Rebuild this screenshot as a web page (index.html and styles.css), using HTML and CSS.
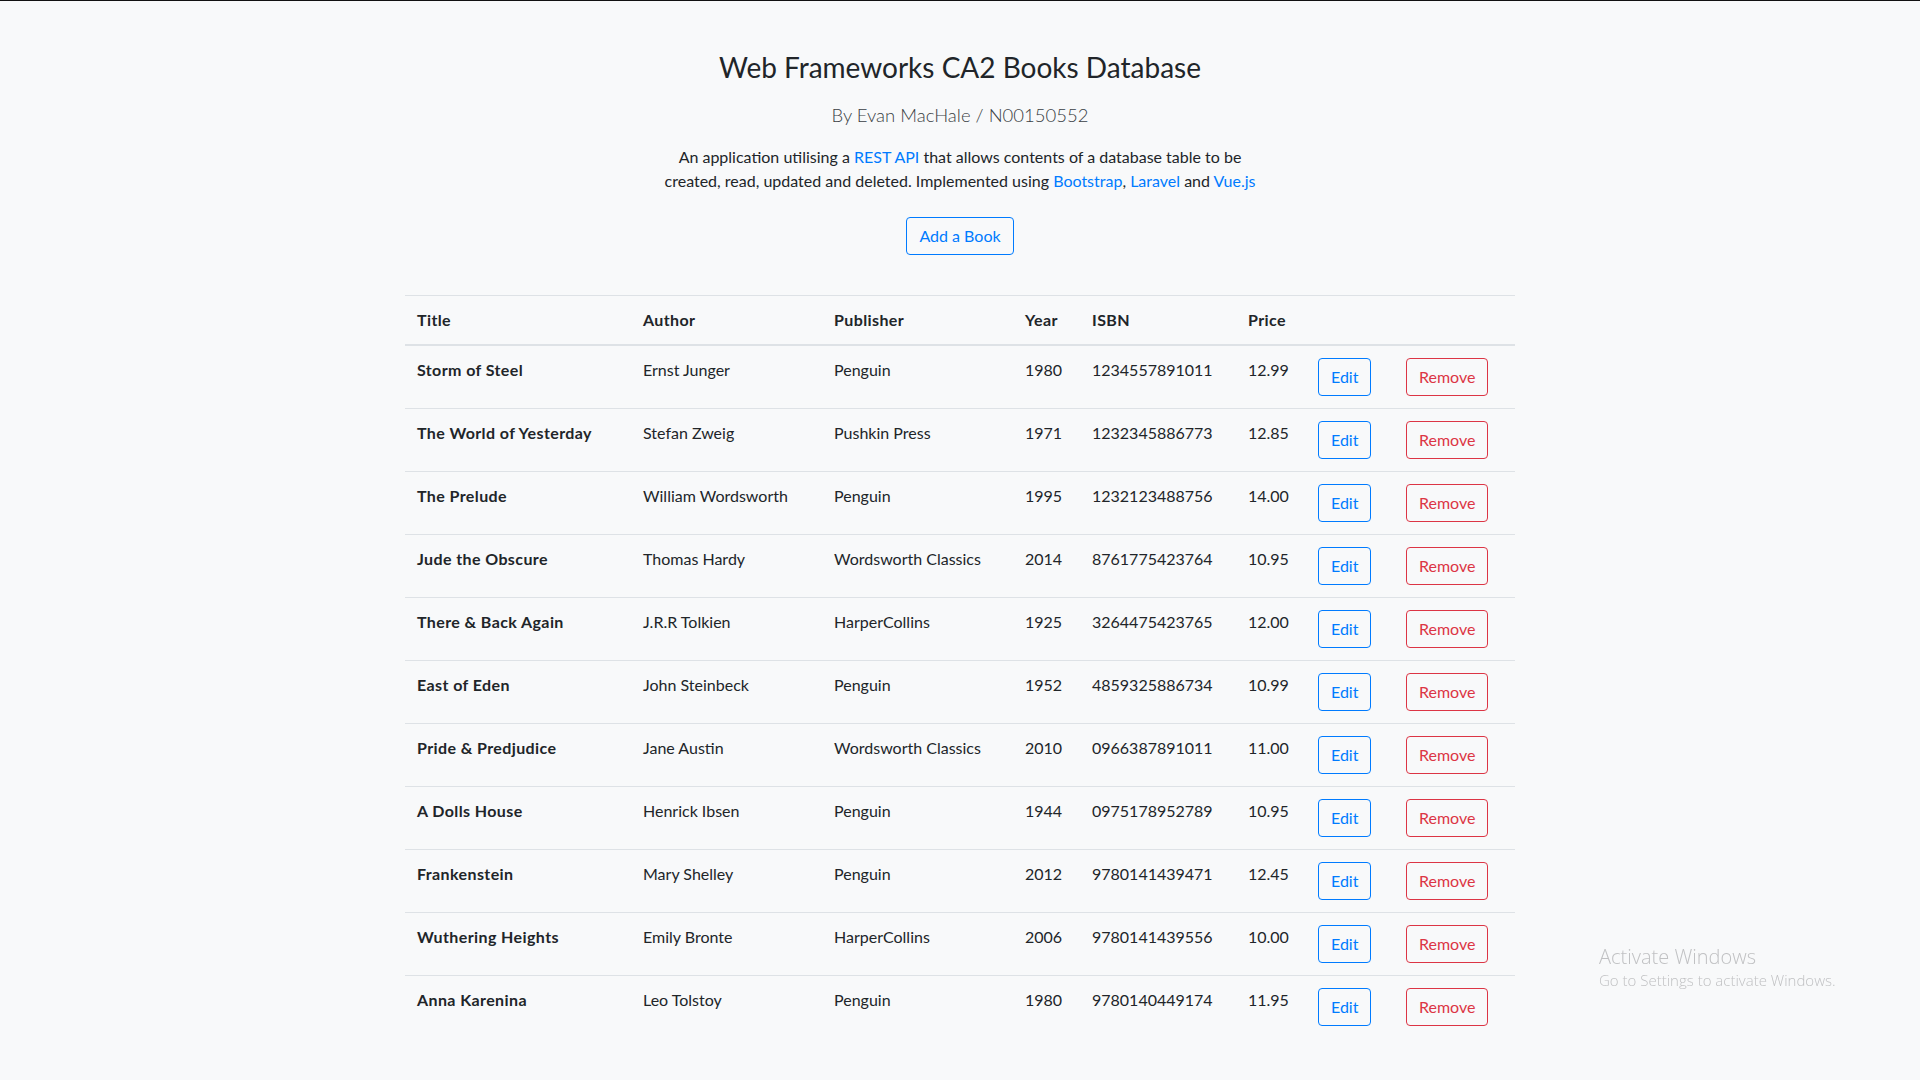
FILE: index.html
```html
<!DOCTYPE html>
<html lang="en">
<head>
<meta charset="utf-8">
<title>Web Frameworks CA2 Books Database</title>
<link rel="stylesheet" href="styles.css">
</head>
<body>
<div class="container">
  <header class="intro">
    <h1 class="title">Web Frameworks CA2 Books Database</h1>
    <p class="lead">By Evan MacHale / N00150552</p>
    <p class="desc">An application utilising a <a href="#">REST API</a> that allows contents of a database table to be<br>created, read, updated and deleted. Implemented using <a href="#">Bootstrap</a>, <a href="#">Laravel</a> and <a href="#">Vue.js</a></p>
    <button class="btn btn-blue">Add a Book</button>
  </header>

  <table class="books">
    <colgroup>
      <col class="c-title"><col class="c-author"><col class="c-pub"><col class="c-year"><col class="c-isbn"><col class="c-price"><col class="c-edit"><col class="c-remove">
    </colgroup>
    <thead>
      <tr><th>Title</th><th>Author</th><th>Publisher</th><th>Year</th><th>ISBN</th><th>Price</th><th></th><th></th></tr>
    </thead>
    <tbody>
      <tr><th>Storm of Steel</th><td>Ernst Junger</td><td>Penguin</td><td>1980</td><td>1234557891011</td><td>12.99</td><td><button class="btn btn-blue">Edit</button></td><td><button class="btn btn-red">Remove</button></td></tr>
      <tr><th>The World of Yesterday</th><td>Stefan Zweig</td><td>Pushkin Press</td><td>1971</td><td>1232345886773</td><td>12.85</td><td><button class="btn btn-blue">Edit</button></td><td><button class="btn btn-red">Remove</button></td></tr>
      <tr><th>The Prelude</th><td>William Wordsworth</td><td>Penguin</td><td>1995</td><td>1232123488756</td><td>14.00</td><td><button class="btn btn-blue">Edit</button></td><td><button class="btn btn-red">Remove</button></td></tr>
      <tr><th>Jude the Obscure</th><td>Thomas Hardy</td><td>Wordsworth Classics</td><td>2014</td><td>8761775423764</td><td>10.95</td><td><button class="btn btn-blue">Edit</button></td><td><button class="btn btn-red">Remove</button></td></tr>
      <tr><th>There &amp; Back Again</th><td>J.R.R Tolkien</td><td>HarperCollins</td><td>1925</td><td>3264475423765</td><td>12.00</td><td><button class="btn btn-blue">Edit</button></td><td><button class="btn btn-red">Remove</button></td></tr>
      <tr><th>East of Eden</th><td>John Steinbeck</td><td>Penguin</td><td>1952</td><td>4859325886734</td><td>10.99</td><td><button class="btn btn-blue">Edit</button></td><td><button class="btn btn-red">Remove</button></td></tr>
      <tr><th>Pride &amp; Predjudice</th><td>Jane Austin</td><td>Wordsworth Classics</td><td>2010</td><td>0966387891011</td><td>11.00</td><td><button class="btn btn-blue">Edit</button></td><td><button class="btn btn-red">Remove</button></td></tr>
      <tr><th>A Dolls House</th><td>Henrick Ibsen</td><td>Penguin</td><td>1944</td><td>0975178952789</td><td>10.95</td><td><button class="btn btn-blue">Edit</button></td><td><button class="btn btn-red">Remove</button></td></tr>
      <tr><th>Frankenstein</th><td>Mary Shelley</td><td>Penguin</td><td>2012</td><td>9780141439471</td><td>12.45</td><td><button class="btn btn-blue">Edit</button></td><td><button class="btn btn-red">Remove</button></td></tr>
      <tr><th>Wuthering Heights</th><td>Emily Bronte</td><td>HarperCollins</td><td>2006</td><td>9780141439556</td><td>10.00</td><td><button class="btn btn-blue">Edit</button></td><td><button class="btn btn-red">Remove</button></td></tr>
      <tr><th>Anna Karenina</th><td>Leo Tolstoy</td><td>Penguin</td><td>1980</td><td>9780140449174</td><td>11.95</td><td><button class="btn btn-blue">Edit</button></td><td><button class="btn btn-red">Remove</button></td></tr>
    </tbody>
  </table>
</div>

<div class="watermark">
  <div class="wm-title">Activate Windows</div>
  <div class="wm-sub">Go to Settings to activate Windows.</div>
</div>
</body>
</html>
```

FILE: styles.css
```css
html, body {
  margin: 0;
  padding: 0;
}

body {
  background: #f8f9fa;
  color: #212529;
  font-family: Lato, "Noto Sans", "Liberation Sans", sans-serif;
  font-size: 16px;
  line-height: 24px;
  border-top: 1px solid #111;
  min-height: 1079px;
  box-sizing: border-box;
}

.container {
  width: 1140px;
  padding: 0 15px;
  margin: 0 auto;
  box-sizing: border-box;
}

.intro {
  text-align: center;
  padding-top: 49px;
}

.title {
  font-size: 28px;
  font-weight: 400;
  line-height: 34px;
  margin: 0 0 16px;
}

.lead {
  font-size: 18.5px;
  font-weight: 300;
  line-height: 30px;
  color: #3a3f44;
  margin: 0 0 15px;
}

.desc {
  margin: 0 0 24px;
}

.desc a {
  color: #007bff;
  text-decoration: none;
}

.btn {
  display: inline-block;
  font-family: inherit;
  font-size: 16px;
  line-height: 24px;
  padding: 6px 12px;
  border-radius: 4px;
  background: transparent;
  border: 1px solid;
  cursor: pointer;
  box-sizing: border-box;
  height: 38px;
}

.btn-blue {
  color: #007bff;
  border-color: #007bff;
}

.btn-red {
  color: #dc3545;
  border-color: #dc3545;
}

.books {
  margin-top: 40px;
  width: 1110px;
  border-collapse: collapse;
  table-layout: fixed;
}

.c-title { width: 226px; }
.c-author { width: 191px; }
.c-pub { width: 191px; }
.c-year { width: 67px; }
.c-isbn { width: 156px; }
.c-price { width: 70px; }
.c-edit { width: 88px; }
.c-remove { width: 121px; }

.books th,
.books td {
  padding: 12px;
  text-align: left;
  vertical-align: top;
  border-top: 1px solid #dee2e6;
  white-space: nowrap;
}

.books th {
  font-weight: 700;
  letter-spacing: 0.4px;
}

.books thead th {
  vertical-align: bottom;
  border-bottom: 2px solid #dee2e6;
}

.watermark {
  position: fixed;
  left: 1599px;
  top: 944px;
  color: #c0c1c3;
  font-family: "Open Sans", "Noto Sans", sans-serif;
  font-weight: 300;
}

.wm-title {
  font-size: 20px;
  line-height: 26px;
}

.wm-sub {
  font-size: 15px;
  line-height: 21px;
}
```
